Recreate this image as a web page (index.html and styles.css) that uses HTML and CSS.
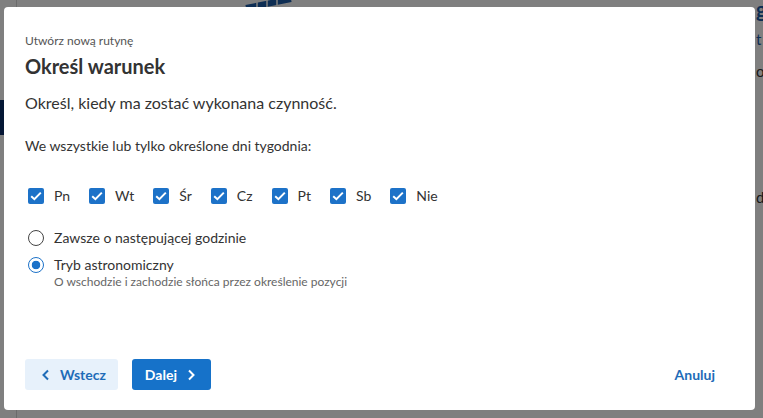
FILE: index.html
```html
<!DOCTYPE html>
<html lang="pl">
<head>
    <meta charset="UTF-8">
    <meta name="viewport" content="width=device-width, initial-scale=1.0">
    <title>Utwórz nową rutynę</title>
    <link rel="stylesheet" href="styles.css">
</head>
<body>
    <div class="page">
        <div class="sidebar">
            <div class="nav-active"></div>
        </div>
        <div class="content">
            <div class="hero">
                <svg class="hero-art" width="50" height="10" viewBox="0 0 50 10">
                    <path d="M1 8 L46 -1" stroke="#1b5aa6" stroke-width="6" fill="none"/>
                    <path d="M12 9 L12 2 M22 7 L22 0 M32 5 L32 0" stroke="#fff" stroke-width="1.5"/>
                </svg>
            </div>
            <div class="side-text">
                <span class="peek peek-g">g</span>
                <span class="peek peek-t">t</span>
                <span class="peek peek-o">o</span>
                <span class="peek peek-d">d</span>
            </div>
        </div>
    </div>

    <div class="overlay"></div>

    <div class="modal">
        <div class="eyebrow">Utwórz nową rutynę</div>
        <h2>Określ warunek</h2>
        <p class="lead">Określ, kiedy ma zostać wykonana czynność.</p>
        <p class="days-label">We wszystkie lub tylko określone dni tygodnia:</p>

        <div class="days">
            <label class="day"><span class="check"><svg width="12" height="10" viewBox="0 0 12 10"><path d="M1.2 5.2 L4.4 8.2 L10.8 1.6" stroke="#fff" stroke-width="2" fill="none"/></svg></span>Pn</label>
            <label class="day"><span class="check"><svg width="12" height="10" viewBox="0 0 12 10"><path d="M1.2 5.2 L4.4 8.2 L10.8 1.6" stroke="#fff" stroke-width="2" fill="none"/></svg></span>Wt</label>
            <label class="day"><span class="check"><svg width="12" height="10" viewBox="0 0 12 10"><path d="M1.2 5.2 L4.4 8.2 L10.8 1.6" stroke="#fff" stroke-width="2" fill="none"/></svg></span>Śr</label>
            <label class="day"><span class="check"><svg width="12" height="10" viewBox="0 0 12 10"><path d="M1.2 5.2 L4.4 8.2 L10.8 1.6" stroke="#fff" stroke-width="2" fill="none"/></svg></span>Cz</label>
            <label class="day"><span class="check"><svg width="12" height="10" viewBox="0 0 12 10"><path d="M1.2 5.2 L4.4 8.2 L10.8 1.6" stroke="#fff" stroke-width="2" fill="none"/></svg></span>Pt</label>
            <label class="day"><span class="check"><svg width="12" height="10" viewBox="0 0 12 10"><path d="M1.2 5.2 L4.4 8.2 L10.8 1.6" stroke="#fff" stroke-width="2" fill="none"/></svg></span>Sb</label>
            <label class="day"><span class="check"><svg width="12" height="10" viewBox="0 0 12 10"><path d="M1.2 5.2 L4.4 8.2 L10.8 1.6" stroke="#fff" stroke-width="2" fill="none"/></svg></span>Nie</label>
        </div>

        <div class="modes">
            <label class="mode">
                <span class="radio"></span>
                <span class="mode-text">Zawsze o następującej godzinie</span>
            </label>
            <label class="mode">
                <span class="radio selected"></span>
                <span class="mode-text">
                    Tryb astronomiczny
                    <small>O wschodzie i zachodzie słońca przez określenie pozycji</small>
                </span>
            </label>
        </div>

        <div class="footer">
            <button class="btn btn-back">
                <svg width="10" height="12" viewBox="0 0 10 12"><path d="M7 1.5 L2.5 6 L7 10.5" stroke="currentColor" stroke-width="2" fill="none"/></svg>
                Wstecz
            </button>
            <button class="btn btn-next">
                Dalej
                <svg width="10" height="12" viewBox="0 0 10 12"><path d="M3 1.5 L7.5 6 L3 10.5" stroke="currentColor" stroke-width="2" fill="none"/></svg>
            </button>
            <button class="btn-link">Anuluj</button>
        </div>
    </div>
</body>
</html>
```

FILE: styles.css
```css
body {
    font-family: Lato, "Open Sans", sans-serif;
    margin: 0;
    padding: 0;
    background-color: #fff;
    overflow: hidden;
}

.page {
    display: flex;
    height: 418px;
}

.sidebar {
    width: 16px;
    border-right: 1px solid #d6d6d6;
    padding-top: 100px;
}

.nav-active {
    width: 4px;
    height: 35px;
    background-color: #0a2f6b;
}

.content {
    flex: 1;
    display: flex;
    justify-content: space-between;
}

.hero {
    padding-left: 228px;
}

.hero-art {
    display: block;
}

.side-text {
    display: flex;
    flex-direction: column;
    width: 7px;
    color: #333;
    font-size: 15px;
    line-height: 18px;
}

.peek-g {
    color: #1b5aa6;
    font-weight: 700;
    font-size: 20px;
}

.peek-t {
    color: #1b5aa6;
    margin-top: 12px;
}

.peek-o {
    margin-top: 14px;
}

.peek-d {
    margin-top: 108px;
}

.overlay {
    position: fixed;
    top: 0;
    left: 0;
    width: 100%;
    height: 100%;
    background: rgba(0, 0, 0, 0.5);
}

.modal {
    position: fixed;
    top: 7px;
    left: 4px;
    width: 751px;
    height: 403px;
    box-sizing: border-box;
    background-color: #fff;
    border-radius: 4px;
    padding: 26px 21px 20px;
    display: flex;
    flex-direction: column;
    color: #333;
}

.eyebrow {
    font-size: 12px;
    color: #555;
    line-height: 16px;
}

.modal h2 {
    margin: 4px 0 0;
    font-size: 20px;
    font-weight: 700;
    line-height: 26px;
    color: #333;
}

.lead {
    margin: 13px 0 0;
    font-size: 16px;
    line-height: 22px;
}

.days-label {
    margin: 22px 0 0;
    font-size: 14px;
    line-height: 20px;
}

.days {
    display: flex;
    gap: 19px;
    margin-top: 30px;
    padding-left: 3px;
}

.day {
    display: flex;
    align-items: center;
    gap: 10px;
    font-size: 14px;
    line-height: 20px;
}

.check {
    width: 16px;
    height: 16px;
    border-radius: 2px;
    background-color: #1d72c8;
    display: flex;
    align-items: center;
    justify-content: center;
}

.modes {
    display: flex;
    flex-direction: column;
    gap: 7px;
    margin-top: 22px;
    padding-left: 3px;
}

.mode {
    display: flex;
    align-items: flex-start;
    gap: 10px;
    font-size: 14px;
    line-height: 20px;
}

.radio {
    width: 16px;
    height: 16px;
    box-sizing: border-box;
    border: 1px solid #444;
    border-radius: 50%;
    margin-top: 2px;
    flex-shrink: 0;
}

.radio.selected {
    border-color: #1d72c8;
    background: radial-gradient(circle, #1d72c8 0, #1d72c8 4px, #fff 4.6px);
}

.mode-text small {
    display: block;
    font-size: 12px;
    line-height: 14px;
    color: #666;
}

.footer {
    margin-top: auto;
    display: flex;
    align-items: center;
    gap: 14px;
}

.btn {
    height: 31px;
    border: none;
    border-radius: 3px;
    display: flex;
    align-items: center;
    gap: 9px;
    font-family: "Liberation Sans Narrow", Lato, sans-serif;
    font-size: 14px;
    font-weight: 700;
    cursor: pointer;
}

.btn-back {
    background-color: #e7f1fb;
    color: #1e6cb8;
    padding: 0 12px 0 16px;
}

.btn-next {
    background-color: #1672c9;
    color: #fff;
    padding: 0 15px 0 13px;
}

.btn-link {
    margin-left: auto;
    margin-right: 13px;
    border: none;
    background: none;
    color: #1e6cb8;
    font-family: "Liberation Sans Narrow", Lato, sans-serif;
    font-size: 14px;
    font-weight: 700;
    cursor: pointer;
}
```
